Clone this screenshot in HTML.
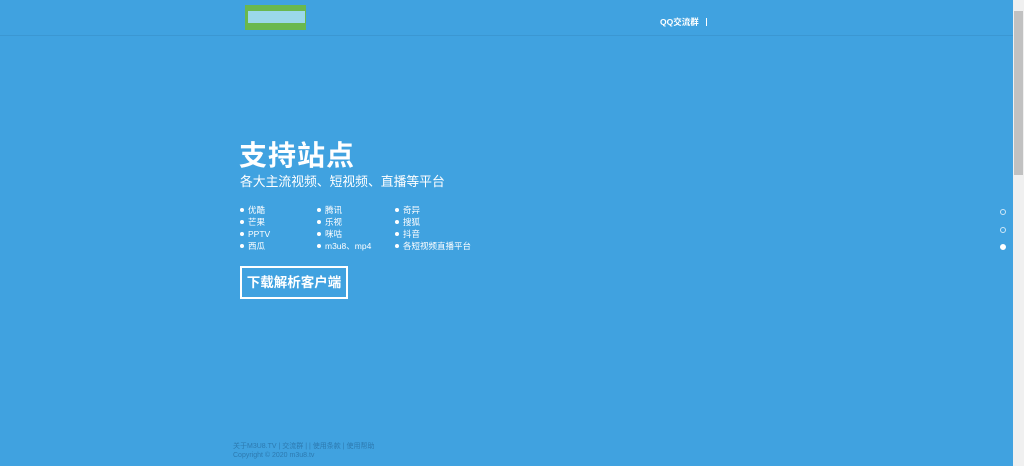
<!DOCTYPE html>
<html><head><meta charset="utf-8"><style>
*{margin:0;padding:0;box-sizing:border-box}
body{width:1024px;height:466px;overflow:hidden;background:#40a2e0;font-family:"Liberation Sans","Noto Sans CJK SC",sans-serif;color:#fff;position:relative}
.hdr{position:absolute;left:0;top:0;width:1013px;height:36px;border-bottom:1px solid #3b97d2}
.logo{position:absolute;left:245px;top:5px;width:61px;height:25px;background:#6ab84e}
.logo i{position:absolute;left:3px;top:6px;width:57px;height:12px;background:#9bd8ea}
.qq{position:absolute;left:660px;top:16px;font-size:8.5px;font-weight:bold}
.bar{position:absolute;left:706px;top:18px;width:1px;height:8px;background:#fff}
h1{position:absolute;left:239px;top:134px;font-size:28px;font-weight:bold;letter-spacing:1px}
h2{position:absolute;left:240px;top:171px;font-size:12.8px;font-weight:normal}
.col{position:absolute;top:204px;font-size:8.5px;line-height:12px;list-style:none}
.col li:before{content:"";display:inline-block;width:4px;height:4px;border-radius:50%;background:#fff;margin-right:4px;vertical-align:1px}
.btn{position:absolute;left:240px;top:266px;width:108px;height:33px;border:2px solid #fff;font-size:13.5px;font-weight:bold;text-align:center;line-height:29px}
.ft{position:absolute;left:233px;font-size:7px;color:#2d7ab0}
.dot{position:absolute;left:1000px;width:6px;height:6px;border-radius:50%;border:1px solid #cfe7f7}
.sb{position:absolute;left:1013px;top:0;width:11px;height:466px;background:#f0f0f0}
.th{position:absolute;left:1014px;top:11px;width:9px;height:164px;background:#c1c1c1}
</style></head><body>
<div class="hdr"></div>
<div class="logo"><i></i></div>
<div class="qq">QQ交流群</div><div class="bar"></div>
<h1>支持站点</h1>
<h2>各大主流视频、短视频、直播等平台</h2>
<ul class="col" style="left:240px"><li>优酷</li><li>芒果</li><li>PPTV</li><li>西瓜</li></ul>
<ul class="col" style="left:317px"><li>腾讯</li><li>乐视</li><li>咪咕</li><li>m3u8、mp4</li></ul>
<ul class="col" style="left:395px"><li>奇异</li><li>搜狐</li><li>抖音</li><li>各短视频直播平台</li></ul>
<div class="btn">下载解析客户端</div>
<div class="ft" style="top:441px">关于M3U8.TV | 交流群 | | 使用条款 | 使用帮助</div>
<div class="ft" style="top:452px">Copyright © 2020 m3u8.tv</div>
<div class="dot" style="top:209px"></div>
<div class="dot" style="top:227px"></div>
<div class="dot" style="top:244px;background:#fff;border-color:#fff"></div>
<div class="sb"></div><div class="th"></div>
</body></html>
